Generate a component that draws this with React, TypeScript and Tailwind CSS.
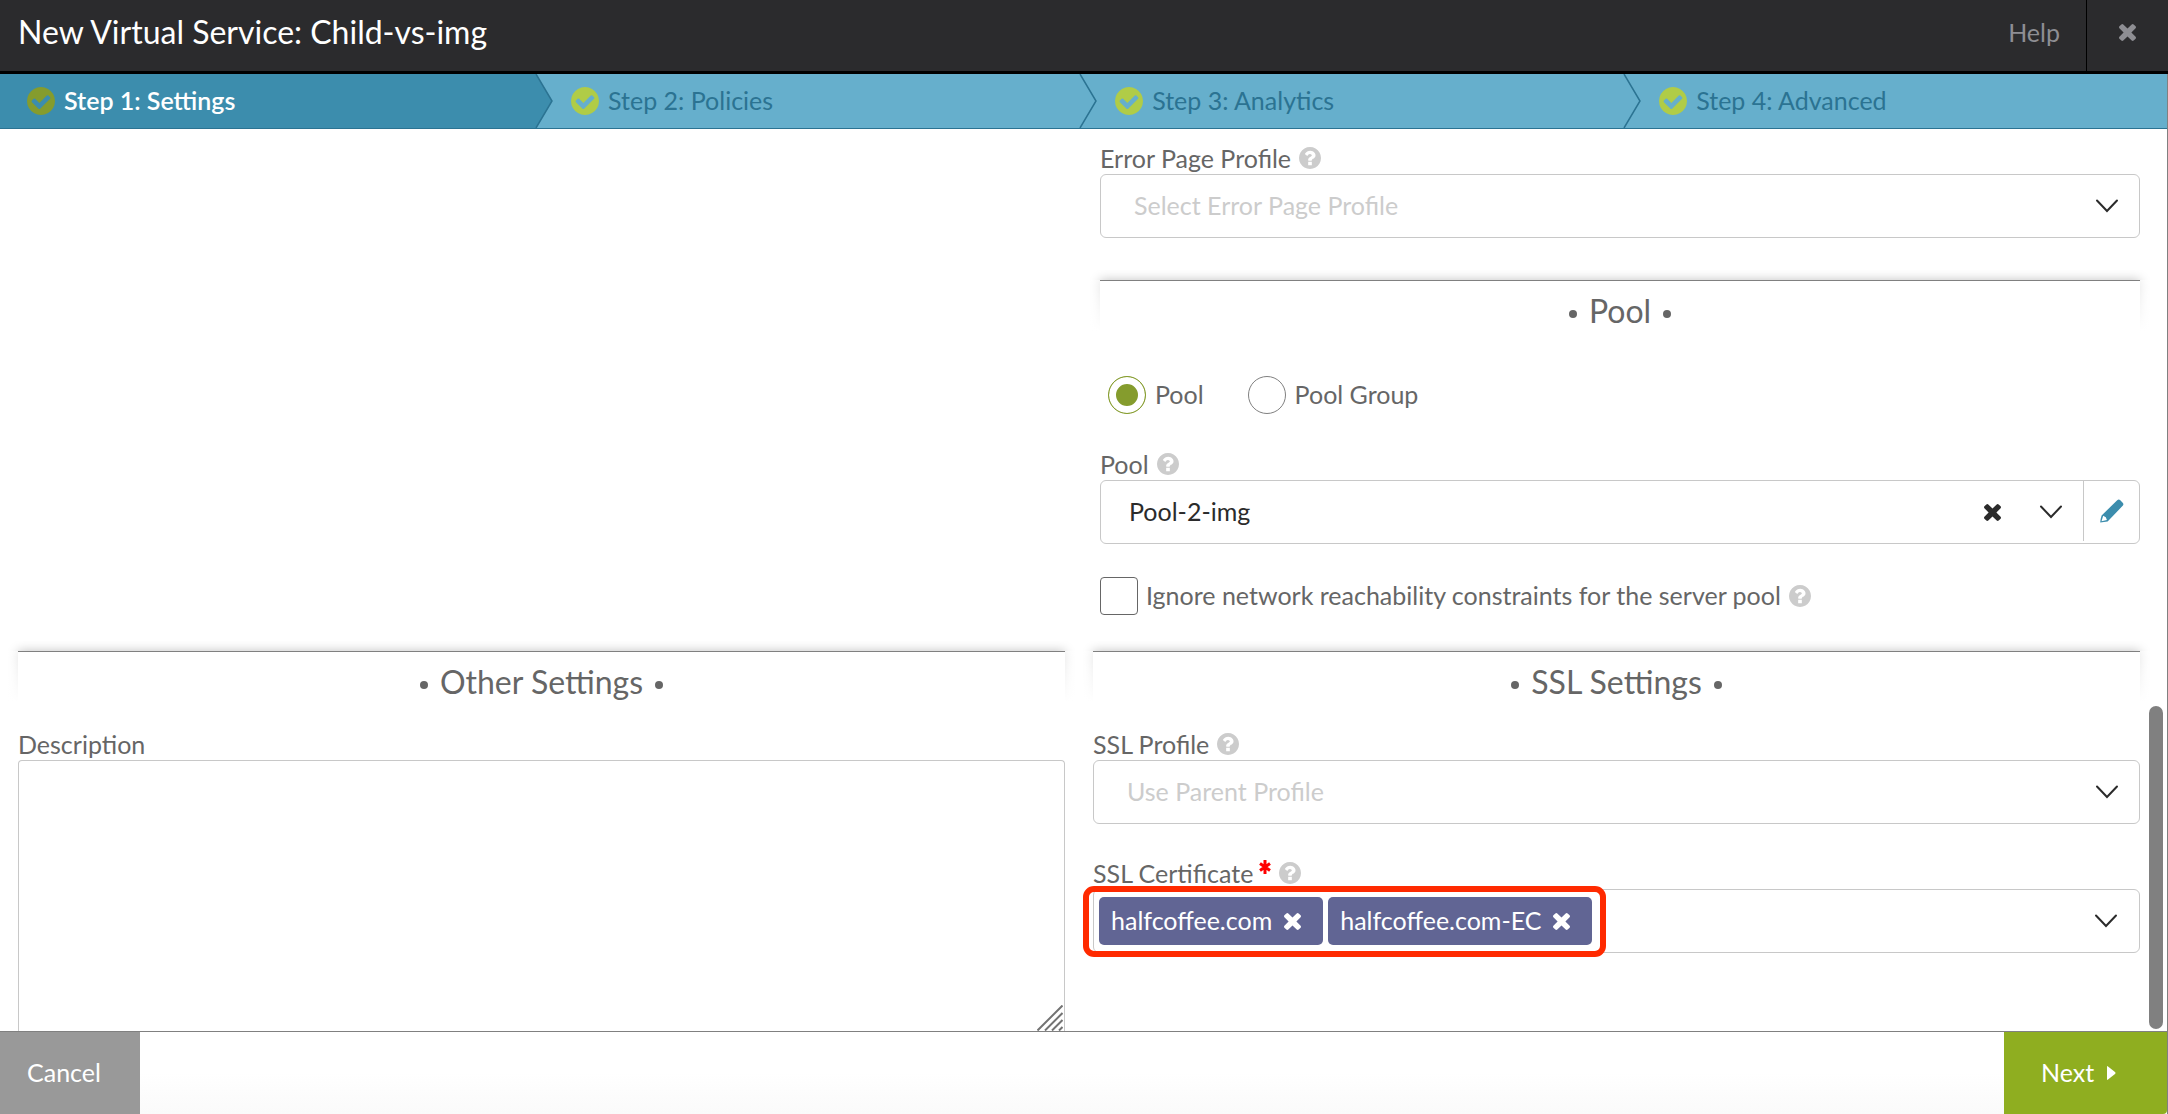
import { useState, type ReactNode } from "react";

const CIRCLE =
  "m384 192q0 209-103 385.5t-279.5 279.5-385.5 103-385.5-103-279.5-279.5-103-385.5 103-385.5 279.5-279.5 385.5-103 385.5 103 279.5 279.5 103 385.5z";

function CrossIcon({ className = "" }: { className?: string }) {
  return (
    <svg viewBox="302 366 1188 1188" fill="currentColor" aria-hidden="true" className={`size-[17px] shrink-0 ${className}`}>
      <path d="M1490 1322q0 40-28 68l-136 136q-28 28-68 28t-68-28l-294-294-294 294q-28 28-68 28t-68-28l-136-136q-28-28-28-68t28-68l294-294-294-294q-28-28-28-68t28-68l136-136q28-28 68-28t68 28l294 294 294-294q28-28 68-28t68 28l136 136q28 28 28 68t-28 68l-294 294 294 294q28 28 28 68z" />
    </svg>
  );
}

function CheckIcon({ className = "" }: { className?: string }) {
  return (
    <svg viewBox="128 128 1536 1536" fill="currentColor" aria-hidden="true" className={`size-7 shrink-0 ${className}`}>
      <path d="M1412 734q0-28-18-46l-91-90q-19-19-45-19t-45 19l-408 407-226-226q-19-19-45-19t-45 19l-91 90q-18 18-18 46 0 27 18 45l362 362q19 19 45 19 27 0 46-19l543-543q18-18 18-45zm252 162q0 209-103 385.5t-279.5 279.5-385.5 103-385.5-103-279.5-279.5-103-385.5 103-385.5 279.5-279.5 385.5-103 385.5 103 279.5 279.5 103 385.5z" />
    </svg>
  );
}

function HelpIcon() {
  return (
    <svg viewBox="128 128 1536 1536" fill="currentColor" aria-hidden="true" className="size-[22px] shrink-0 text-[#cccccc]">
      <path
        d={
          "M1024 1376v-192q0-14-9-23t-23-9h-192q-14 0-23 9t-9 23v192q0 14 9 23t23 9h192q14 0 23-9t9-23zm256-672q0-88-55.5-163t-138.5-116-170-41q-243 0-371 213-15 24 8 42l132 100q7 6 19 6 16 0 25-12 53-68 86-92 34-24 86-24 48 0 85.5 26t37.5 59q0 38-20 61t-68 45q-63 28-115.5 86.5t-52.5 125.5v36q0 14 9 23t23 9h192q14 0 23-9t9-23q0-19 21.5-49.5t54.5-49.5q32-18 49-28.5t46-35 44.5-48 28-60.5 12.5-81z" +
          CIRCLE
        }
      />
    </svg>
  );
}

function ChevronIcon() {
  return (
    <svg viewBox="0 0 24 14" fill="none" stroke="#2b2b2b" strokeWidth="2" strokeLinecap="round" aria-hidden="true" className="h-[14px] w-6 shrink-0">
      <path d="M2 1.5 12 12 22 1.5" />
    </svg>
  );
}

function PencilIcon() {
  return (
    <svg viewBox="0 0 24 24" fill="#3c8dad" aria-hidden="true" className="size-6">
      <path d="M17.2 1.2q1.6-1.5 3.1 0l2.4 2.6q1.4 1.5 0 3L7.6 22.4Q4 23 .2 23.6q.3-3.9 1.4-7.1zM3.2 16.7 1.5 22.3l5.4-1.3-1.1-2.8z" fillRule="evenodd" />
    </svg>
  );
}

function Label({ htmlFor, children, required, help = true }: { htmlFor: string; children: ReactNode; required?: boolean; help?: boolean }) {
  return (
    <div className="flex h-8 items-center gap-2">
      <label htmlFor={htmlFor} className="flex leading-8">
        {children}
        {required && (
          <svg viewBox="0 0 12 14" stroke="#ff0000" strokeWidth="3" aria-hidden="true" className="mt-[3px] ml-1.5 h-[14px] w-3">
            <path d="M6 0v14M1 3.5l10 7M11 3.5l-10 7" />
          </svg>
        )}
      </label>
      {help && <HelpIcon />}
    </div>
  );
}

function SectionTitle({ children }: { children: string }) {
  return (
    <div className="relative">
      <div aria-hidden="true" className="absolute inset-x-0 top-0 h-[51px] shadow-[0_0_10px_rgba(0,0,0,0.25)] [clip-path:inset(-10px_-10px_0_-10px)]" />
      <div aria-hidden="true" className="absolute -inset-x-3 top-0 h-[52px] bg-linear-to-b from-white/50 to-white" />
      <h2 className="relative flex h-[51px] items-center justify-center gap-3 border-t border-[#808080] bg-white pt-[9px] text-[32px] leading-9">
        <span aria-hidden="true" className="mt-1.5 size-2 rounded-full bg-[#666666]" />
        {children}
        <span aria-hidden="true" className="mt-1.5 size-2 rounded-full bg-[#666666]" />
      </h2>
    </div>
  );
}

function SelectBox({ id, placeholder }: { id: string; placeholder: string }) {
  return (
    <div className="grid items-center">
      <select id={id} className="col-start-1 row-start-1 h-16 w-full appearance-none rounded-md border border-[#c8c8c8] bg-white pr-16 pl-[33px] text-[#cccccc] outline-none">
        <option>{placeholder}</option>
      </select>
      <span className="pointer-events-none col-start-1 row-start-1 mr-[21px] justify-self-end">
        <ChevronIcon />
      </span>
    </div>
  );
}

function Tag({ name }: { name: string }) {
  return (
    <span className="flex h-12 items-center gap-3 rounded-[5px] bg-[#616594] pr-[22px] pl-3 text-white">
      {name}
      <button type="button" aria-label={`Remove ${name}`}>
        <CrossIcon />
      </button>
    </span>
  );
}

function Step({ label, active, last }: { label: string; active?: boolean; last?: boolean }) {
  return (
    <li className={`relative ${active ? "bg-[#3c8dad]" : "bg-[#66afcc]"}`}>
      <a href="#" className={`flex h-full items-center gap-[9px] pl-[27px] ${active ? "font-semibold text-white" : "text-[#2b7392]"}`}>
        <CheckIcon className={active ? "text-[#859c2d]" : "text-[#b0cc47]"} />
        {label}
      </a>
      {!last && (
        <svg viewBox="0 0 18 54" preserveAspectRatio="none" aria-hidden="true" className="absolute top-0 -right-[9px] z-10 h-full w-[18px]">
          <path d="M1 0 17 27 1 54H18V0z" fill="#66afcc" />
          <path d="M1 0 17 27 1 54H0V0z" fill={active ? "#3c8dad" : "#66afcc"} />
          <path d="M1 0 17 27 1 54" fill="none" stroke="#2b7392" strokeWidth="1.5" />
        </svg>
      )}
    </li>
  );
}

export default function App() {
  const [target, setTarget] = useState("pool");
  const radio =
    "size-[38px] appearance-none rounded-full border border-[#808080] checked:border-[#859c2d] checked:bg-[#859c2d] checked:shadow-[inset_0_0_0_7px_white]";

  return (
    <div className="flex h-screen flex-col overflow-hidden bg-white font-['Lato','Liberation_Sans',sans-serif] text-[25px] text-[#666666]">
      <header className="flex h-[74px] shrink-0 items-stretch border-b-[3px] border-black bg-[#2b2b2d]">
        <h1 className="flex-1 pt-3 pl-[18px] text-[32px] leading-10 text-white">New Virtual Service: Child-vs-img</h1>
        <a href="#" className="pt-3 pr-[26px] leading-10 text-[#8e8e93]">Help</a>
        <button type="button" aria-label="Close" className="flex w-[82px] justify-center border-l border-black pt-6 text-[#8e8e93]">
          <CrossIcon />
        </button>
      </header>

      <div className="flex min-h-0 flex-1 flex-col border-r border-[#808080]">
        <ol className="grid h-[55px] shrink-0 grid-cols-[1fr_1fr_1fr_calc(25%-7px)] border-b border-[#2b7392] bg-[#66afcc]">
          <Step label="Step 1: Settings" active />
          <Step label="Step 2: Policies" />
          <Step label="Step 3: Analytics" />
          <Step label="Step 4: Advanced" last />
        </ol>

        <main className="relative min-h-0 flex-1 overflow-hidden pt-[13px] pr-[27px] pl-[18px]">
          <div className="grid grid-cols-2 gap-x-7">
            <section className="col-start-2 pl-[7px]">
              <Label htmlFor="error-profile">Error Page Profile</Label>
              <SelectBox id="error-profile" placeholder="Select Error Page Profile" />

              <div className="mt-[42px]">
                <SectionTitle>Pool</SectionTitle>
              </div>

              <div className="mt-[45px] flex gap-11 pl-2">
                <label className="flex items-center gap-[9px]">
                  <input type="radio" name="target" className={radio} checked={target === "pool"} onChange={() => setTarget("pool")} />
                  Pool
                </label>
                <label className="flex items-center gap-[9px]">
                  <input type="radio" name="target" className={radio} checked={target === "group"} onChange={() => setTarget("group")} />
                  Pool Group
                </label>
              </div>

              <div className="mt-[34px]">
                <Label htmlFor="pool">Pool</Label>
                <div className="flex h-16 rounded-md border border-[#c8c8c8]">
                  <div className="grid flex-1 items-center">
                    <select id="pool" className="col-start-1 row-start-1 h-full w-full appearance-none rounded-md pr-32 pl-7 text-[#2b2b2b] outline-none">
                      <option>Pool-2-img</option>
                    </select>
                    <span className="pointer-events-none col-start-1 row-start-1 mr-5 flex items-center gap-[38px] justify-self-end text-[#2b2b2b]">
                      <button type="button" aria-label="Clear pool" className="pointer-events-auto">
                        <CrossIcon />
                      </button>
                      <ChevronIcon />
                    </span>
                  </div>
                  <button type="button" aria-label="Edit pool" className="mb-0.5 flex w-14 items-center justify-center border-l border-[#c8c8c8]">
                    <PencilIcon />
                  </button>
                </div>
              </div>

              <div className="mt-[33px] flex items-center gap-2">
                <label className="flex items-center gap-2">
                  <input type="checkbox" className="size-[38px] appearance-none rounded-[4px] border border-[#666666] checked:bg-[#859c2d]" />
                  Ignore network reachability constraints for the server pool
                </label>
                <HelpIcon />
              </div>
            </section>
          </div>

          <div className="mt-9 grid grid-cols-2 gap-x-7">
            <section>
              <SectionTitle>Other Settings</SectionTitle>
              <div className="mt-[26px]">
                <Label htmlFor="description" help={false}>Description</Label>
                <div className="relative">
                  <textarea id="description" className="block h-[271px] w-full resize-none rounded-t-[4px] border border-b-0 border-[#c8c8c8] outline-none" />
                  <svg viewBox="0 0 26 26" stroke="#737373" strokeWidth="2" aria-hidden="true" className="absolute right-0.5 bottom-0 size-[26px]">
                    <path d="M.5 25.5 25.5.5M8 25.5 25.5 8M15 25.5 25.5 15M22 25.5 25.5 22" />
                  </svg>
                </div>
              </div>
            </section>

            <section>
              <SectionTitle>SSL Settings</SectionTitle>
              <div className="mt-[26px]">
                <Label htmlFor="ssl-profile">SSL Profile</Label>
                <SelectBox id="ssl-profile" placeholder="Use Parent Profile" />
              </div>
              <div className="mt-[33px]">
                <Label htmlFor="ssl-certificate" required>SSL Certificate</Label>
                <div className="relative flex h-16 items-center gap-[5px] rounded-md border border-[#c8c8c8] pr-[21px] pl-[5px]">
                  <Tag name="halfcoffee.com" />
                  <Tag name="halfcoffee.com-EC" />
                  <input id="ssl-certificate" className="min-w-0 flex-1 pl-6 outline-none" />
                  <ChevronIcon />
                  <div aria-hidden="true" className="pointer-events-none absolute -top-1 -left-[11px] h-[71px] w-[523px] rounded-[11px] border-[6px] border-[#ff2a00]" />
                </div>
              </div>
            </section>
          </div>

          <div aria-hidden="true" className="absolute right-1 bottom-0.5 h-[323px] w-[14px] rounded-full bg-[#808080]" />
        </main>

        <footer className="flex h-[83px] shrink-0 items-stretch justify-between border-t border-[#808080] bg-linear-to-b from-white via-white to-[#fafafa] text-white">
          <button type="button" className="w-[140px] bg-[#999999] pl-[27px] text-left">Cancel</button>
          <button type="button" className="flex w-[163px] items-center gap-[13px] rounded-br-[4px] bg-[#8fae20] pl-[37px]">
            Next
            <svg viewBox="0 0 9 14" fill="currentColor" aria-hidden="true" className="h-[14px] w-[9px]">
              <path d="M0 1Q0-.5 1 .5L8 6q1 1 0 2L1 13.5q-1 1-1-.5z" />
            </svg>
          </button>
        </footer>
      </div>
    </div>
  );
}
